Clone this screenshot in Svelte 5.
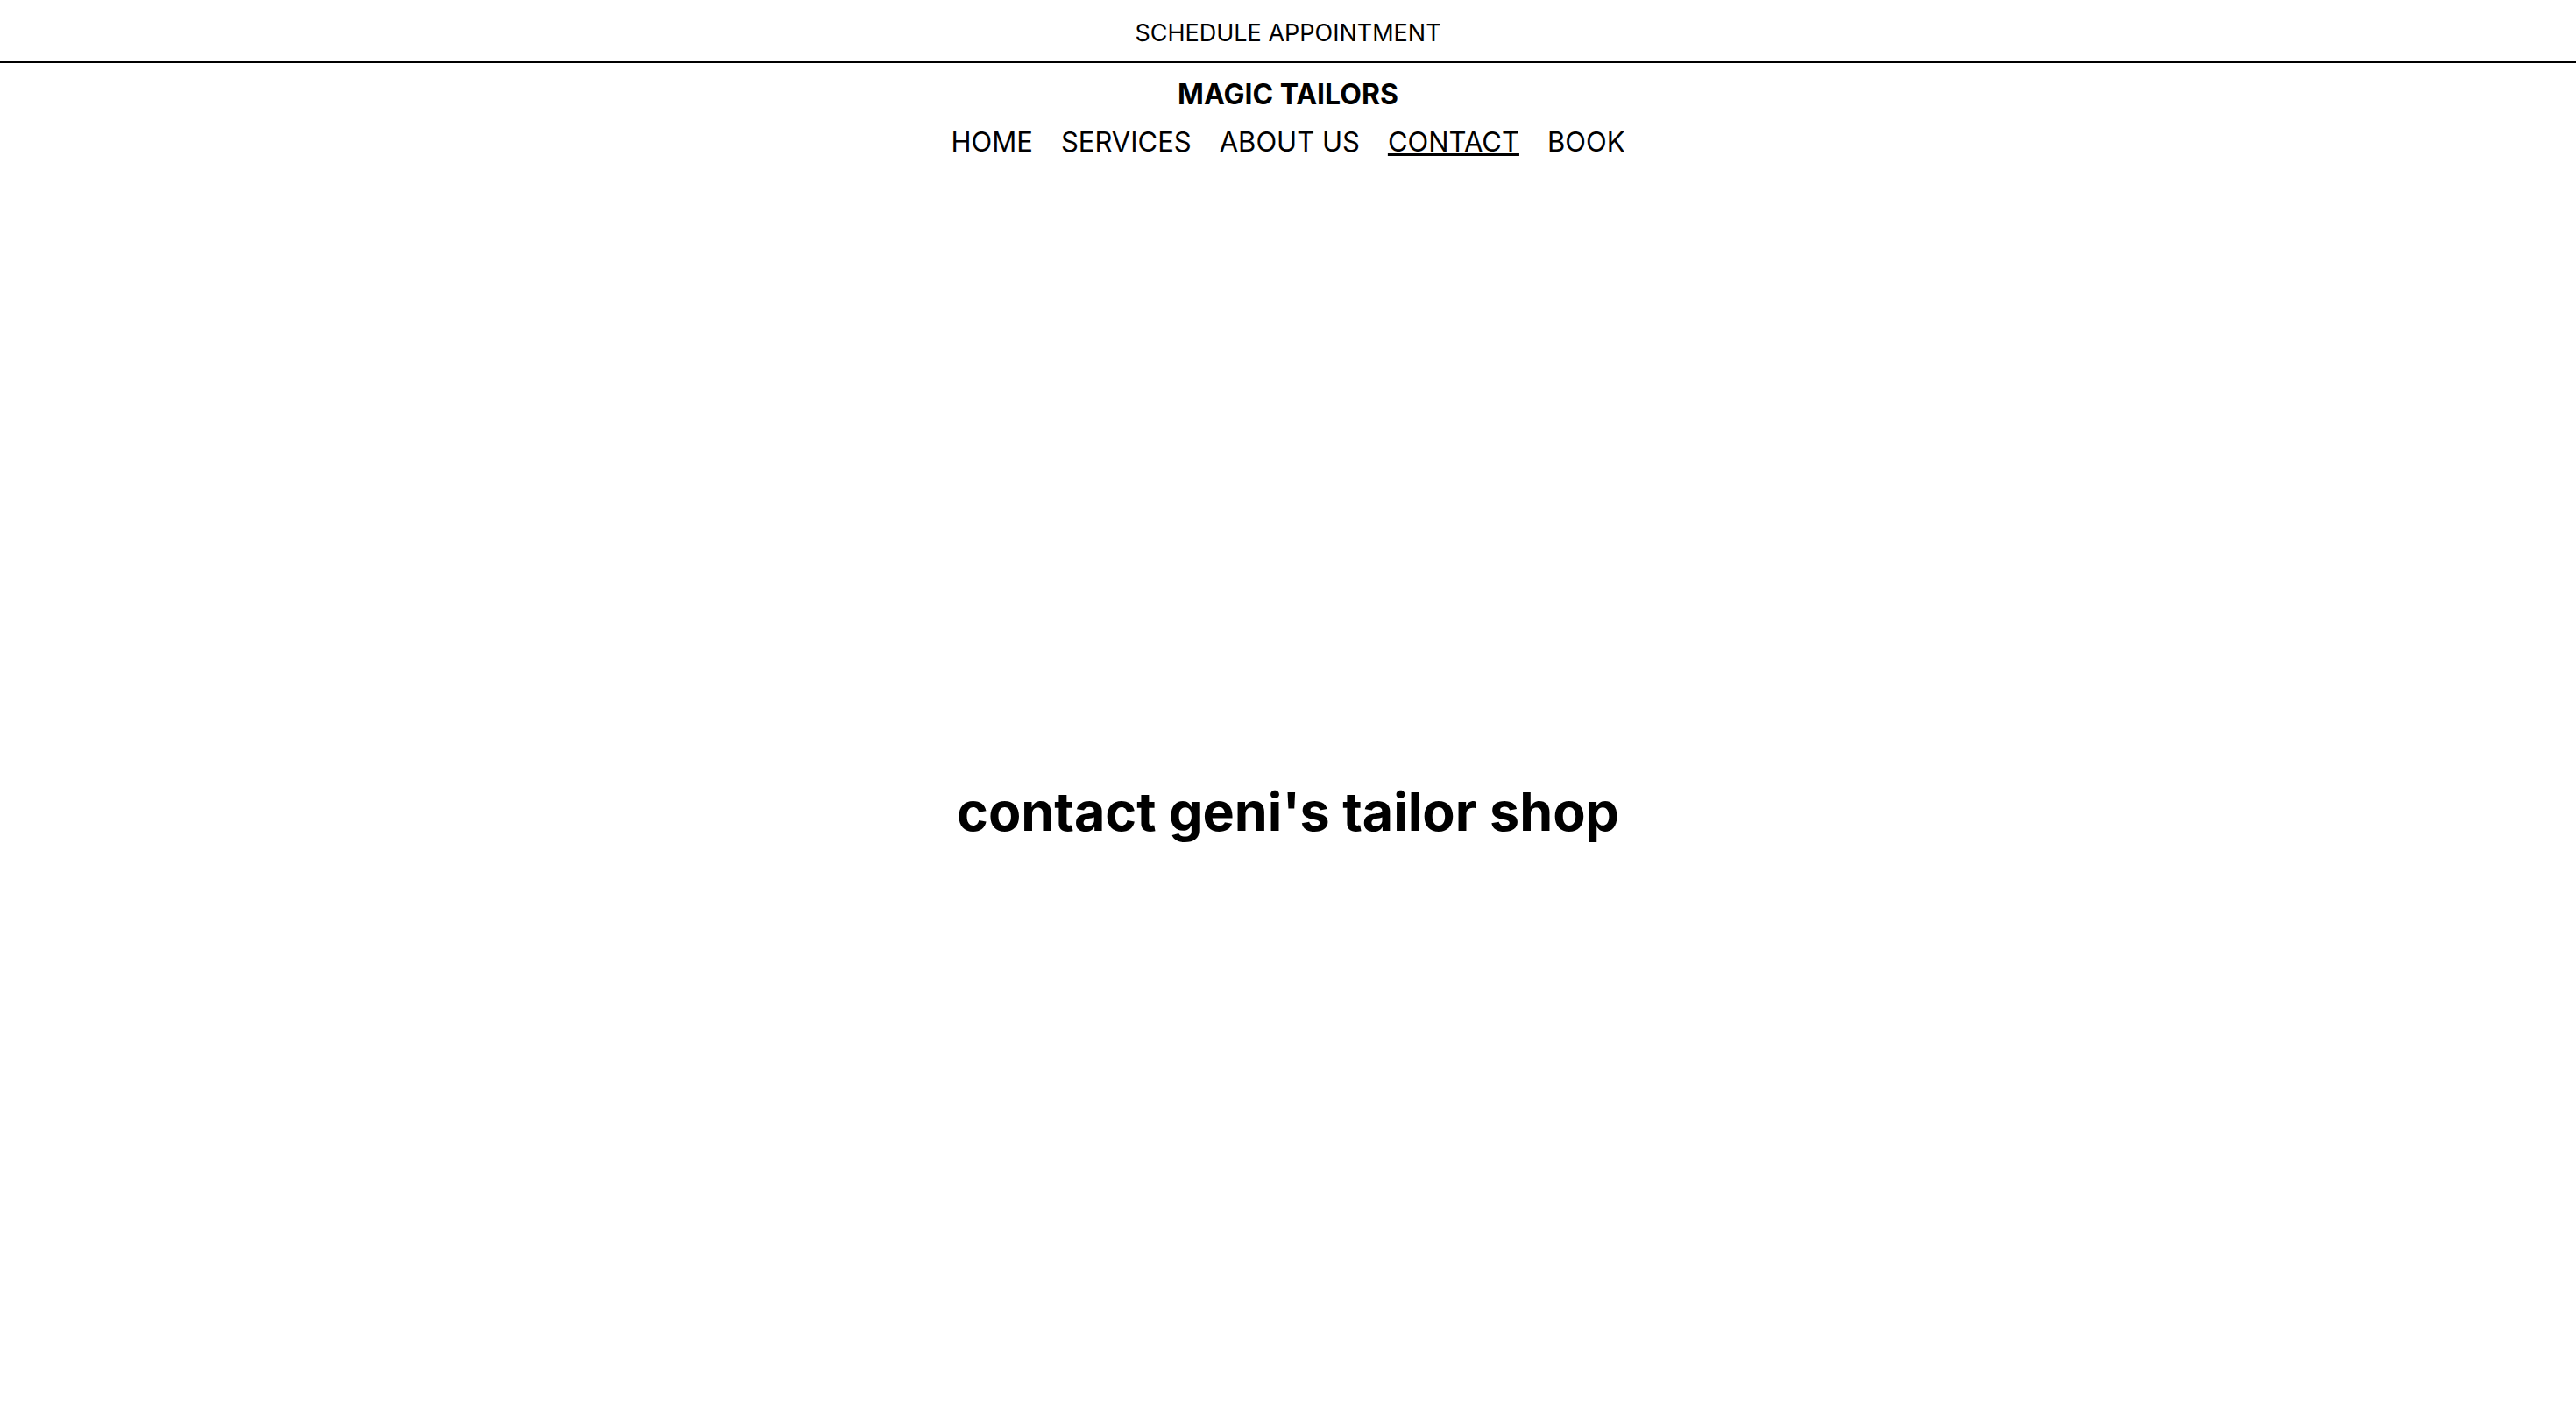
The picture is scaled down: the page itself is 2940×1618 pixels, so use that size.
<script>
  const links = ['HOME', 'SERVICES', 'ABOUT US', 'CONTACT', 'BOOK'];
</script>

<div class="page">
  <div class="banner"><a href="#book">SCHEDULE APPOINTMENT</a></div>
  <header>
    <a class="brand" href="#home">MAGIC TAILORS</a>
    <nav>
      {#each links as link}
        <a href="#{link.toLowerCase().replace(' ', '-')}" class:active={link === 'CONTACT'}>{link}</a>
      {/each}
    </nav>
  </header>
  <main><h1>contact geni's tailor shop</h1></main>
</div>

<style>
  .page {
    min-height: 100vh;
    display: flex;
    flex-direction: column;
    background: #fff;
    color: #000;
    font-family: Inter, 'Liberation Sans', sans-serif;
    font-size: 32px;
    line-height: 38px;
  }
  a { color: inherit; text-decoration: none; }
  .banner {
    padding: 21px 0 15px;
    border-bottom: 2px solid #000;
    text-align: center;
    font-size: 27px;
    line-height: 34px;
  }
  header {
    display: flex;
    flex-direction: column;
    align-items: center;
    gap: 16px;
    padding: 17px 0 52px;
  }
  .brand { font-weight: 700; }
  nav { display: flex; gap: 32px; font-size: 31px; }
  .active {
    text-decoration: underline;
    text-decoration-thickness: 3px;
    text-decoration-skip-ink: none;
  }
  main {
    flex: 1;
    display: flex;
    align-items: center;
    justify-content: center;
  }
  h1 { margin: 0; font-size: 61px; line-height: 76px; font-weight: 700; }
</style>
